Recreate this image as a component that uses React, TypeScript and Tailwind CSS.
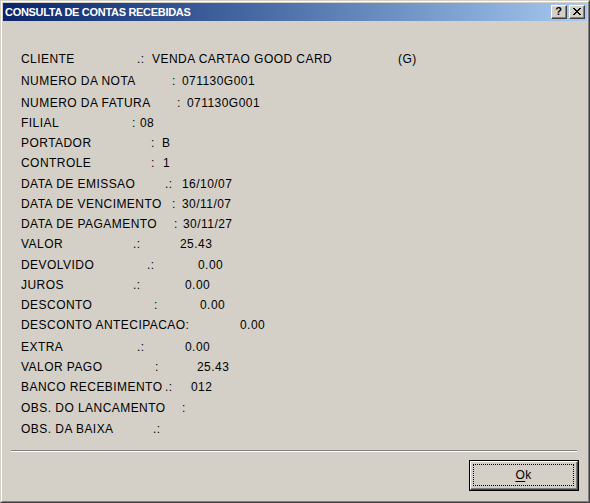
import React from "react";

type Row = {
  label: string;
  sep: string;
  value?: string;
  lw: string;
  sw: string;
  h: string;
  extra?: string;
};

const rows: Row[] = [
  { label: "CLIENTE", sep: ".:", value: "VENDA CARTAO GOOD CARD", extra: "(G)", lw: "w-[116px]", sw: "w-[15px]", h: "h-[22px]" },
  { label: "NUMERO DA NOTA", sep: ":", value: "071130G001", lw: "w-[151px]", sw: "w-[10px]", h: "h-[22px]" },
  { label: "NUMERO DA FATURA", sep: ":", value: "071130G001", lw: "w-[156px]", sw: "w-[10px]", h: "h-[20px]" },
  { label: "FILIAL", sep: ":", value: "08", lw: "w-[111px]", sw: "w-[8px]", h: "h-[20px]" },
  { label: "PORTADOR", sep: ":", value: "B", lw: "w-[130px]", sw: "w-[11px]", h: "h-[20px]" },
  { label: "CONTROLE", sep: ":", value: "1", lw: "w-[130px]", sw: "w-[12px]", h: "h-[21px]" },
  { label: "DATA DE EMISSAO", sep: ".:", value: "16/10/07", lw: "w-[144px]", sw: "w-[17px]", h: "h-[20px]" },
  { label: "DATA DE VENCIMENTO", sep: ":", value: "30/11/07", lw: "w-[151px]", sw: "w-[10px]", h: "h-[20px]" },
  { label: "DATA DE PAGAMENTO", sep: ":", value: "30/11/27", lw: "w-[153px]", sw: "w-[9px]", h: "h-[20px]" },
  { label: "VALOR", sep: ".:", value: "25.43", lw: "w-[112px]", sw: "w-[47px]", h: "h-[21px]" },
  { label: "DEVOLVIDO", sep: ".:", value: "0.00", lw: "w-[126px]", sw: "w-[51px]", h: "h-[20px]" },
  { label: "JUROS", sep: ".:", value: "0.00", lw: "w-[112px]", sw: "w-[52px]", h: "h-[20px]" },
  { label: "DESCONTO", sep: ":", value: "0.00", lw: "w-[133px]", sw: "w-[46px]", h: "h-[20px]" },
  { label: "DESCONTO ANTECIPACAO:", sep: "", value: "0.00", lw: "w-[219px]", sw: "w-0", h: "h-[22px]" },
  { label: "EXTRA", sep: ".:", value: "0.00", lw: "w-[116px]", sw: "w-[48px]", h: "h-[20px]" },
  { label: "VALOR PAGO", sep: ":", value: "25.43", lw: "w-[134px]", sw: "w-[42px]", h: "h-[20px]" },
  { label: "BANCO RECEBIMENTO", sep: ".:", value: "012", lw: "w-[144px]", sw: "w-[26px]", h: "h-[21px]" },
  { label: "OBS. DO LANCAMENTO", sep: ":", lw: "w-[161px]", sw: "w-[10px]", h: "h-[21px]" },
  { label: "OBS. DA BAIXA", sep: ".:", lw: "w-[132px]", sw: "w-[10px]", h: "h-[20px]" },
];

function CaptionButton({ children }: { children: React.ReactNode }) {
  return (
    <div className="h-[14px] w-[16px] border-l border-t border-white border-r-[#404040] border-b-[#404040] border-r border-b bg-[#d4d0c8]">
      <div className="flex h-full w-full items-center justify-center border-r border-b border-[#808080]">
        {children}
      </div>
    </div>
  );
}

export default function App() {
  return (
    <div className="h-[503px] w-[590px] border-l border-t border-[#d4d0c8] border-r border-b border-r-[#404040] border-b-[#404040] bg-[#d4d0c8] font-['Liberation_Sans',Arial,sans-serif] text-black">
      <div className="flex h-full w-full flex-col border-l border-t border-white border-r border-b border-r-[#808080] border-b-[#808080] p-px">
        {/* title bar */}
        <div className="flex h-[18px] items-center bg-gradient-to-r from-[#0a246a] to-[#a6caf0] pl-[2px] pr-[2px]">
          <span className="flex-1 text-[11px] font-bold leading-none tracking-[-0.3px] text-white">
            CONSULTA DE CONTAS RECEBIDAS
          </span>
          <div className="flex gap-[2px]">
            <CaptionButton>
              <span className="text-[11px] font-bold leading-none">?</span>
            </CaptionButton>
            <CaptionButton>
              <svg width="8" height="7" viewBox="0 0 8 7" shapeRendering="crispEdges">
                <path d="M0 0h2v1h-2zM6 0h2v1h-2zM1 1h2v1h-2zM5 1h2v1h-2zM2 2h4v1h-4zM3 3h2v1h-2zM2 4h4v1h-4zM1 5h2v1h-2zM5 5h2v1h-2zM0 6h2v1h-2zM6 6h2v1h-2z" fill="#000" />
              </svg>
            </CaptionButton>
          </div>
        </div>

        {/* body */}
        <div className="flex flex-1 flex-col pt-[28px]">
          <div className="flex flex-col pl-[18px] text-[12px] tracking-[0.45px]">
            {rows.map((r) => (
              <div key={r.label} className={`flex items-start ${r.h}`}>
                <div className="flex h-[20px] items-center">
                  <span className={`${r.lw} shrink-0 whitespace-nowrap`}>{r.label}</span>
                  <span className={`${r.sw} shrink-0 whitespace-nowrap`}>{r.sep}</span>
                  {r.value && (
                    <span className={r.extra ? "w-[246px] shrink-0 whitespace-nowrap" : "whitespace-nowrap"}>
                      {r.value}
                    </span>
                  )}
                  {r.extra && <span>{r.extra}</span>}
                </div>
              </div>
            ))}
          </div>

          <div className="mt-[11px] ml-[8px] mr-[10px] h-[2px] border-t border-b border-t-[#808080] border-b-white" />

          <div className="flex justify-end pt-[8px] pr-[8px]">
            <button className="h-[31px] w-[110px] border border-black bg-[#d4d0c8] p-0">
              <div className="h-full w-full border-l border-t border-white border-r border-b border-r-[#404040] border-b-[#404040]">
                <div className="h-full w-full border-r border-b border-[#808080] p-[2px]">
                  <div className="flex h-full w-full items-center justify-center border border-dotted border-black text-[12px] tracking-[0.45px]">
                    <span>
                      <span className="underline underline-offset-2">O</span>k
                    </span>
                  </div>
                </div>
              </div>
            </button>
          </div>
        </div>
      </div>
    </div>
  );
}
